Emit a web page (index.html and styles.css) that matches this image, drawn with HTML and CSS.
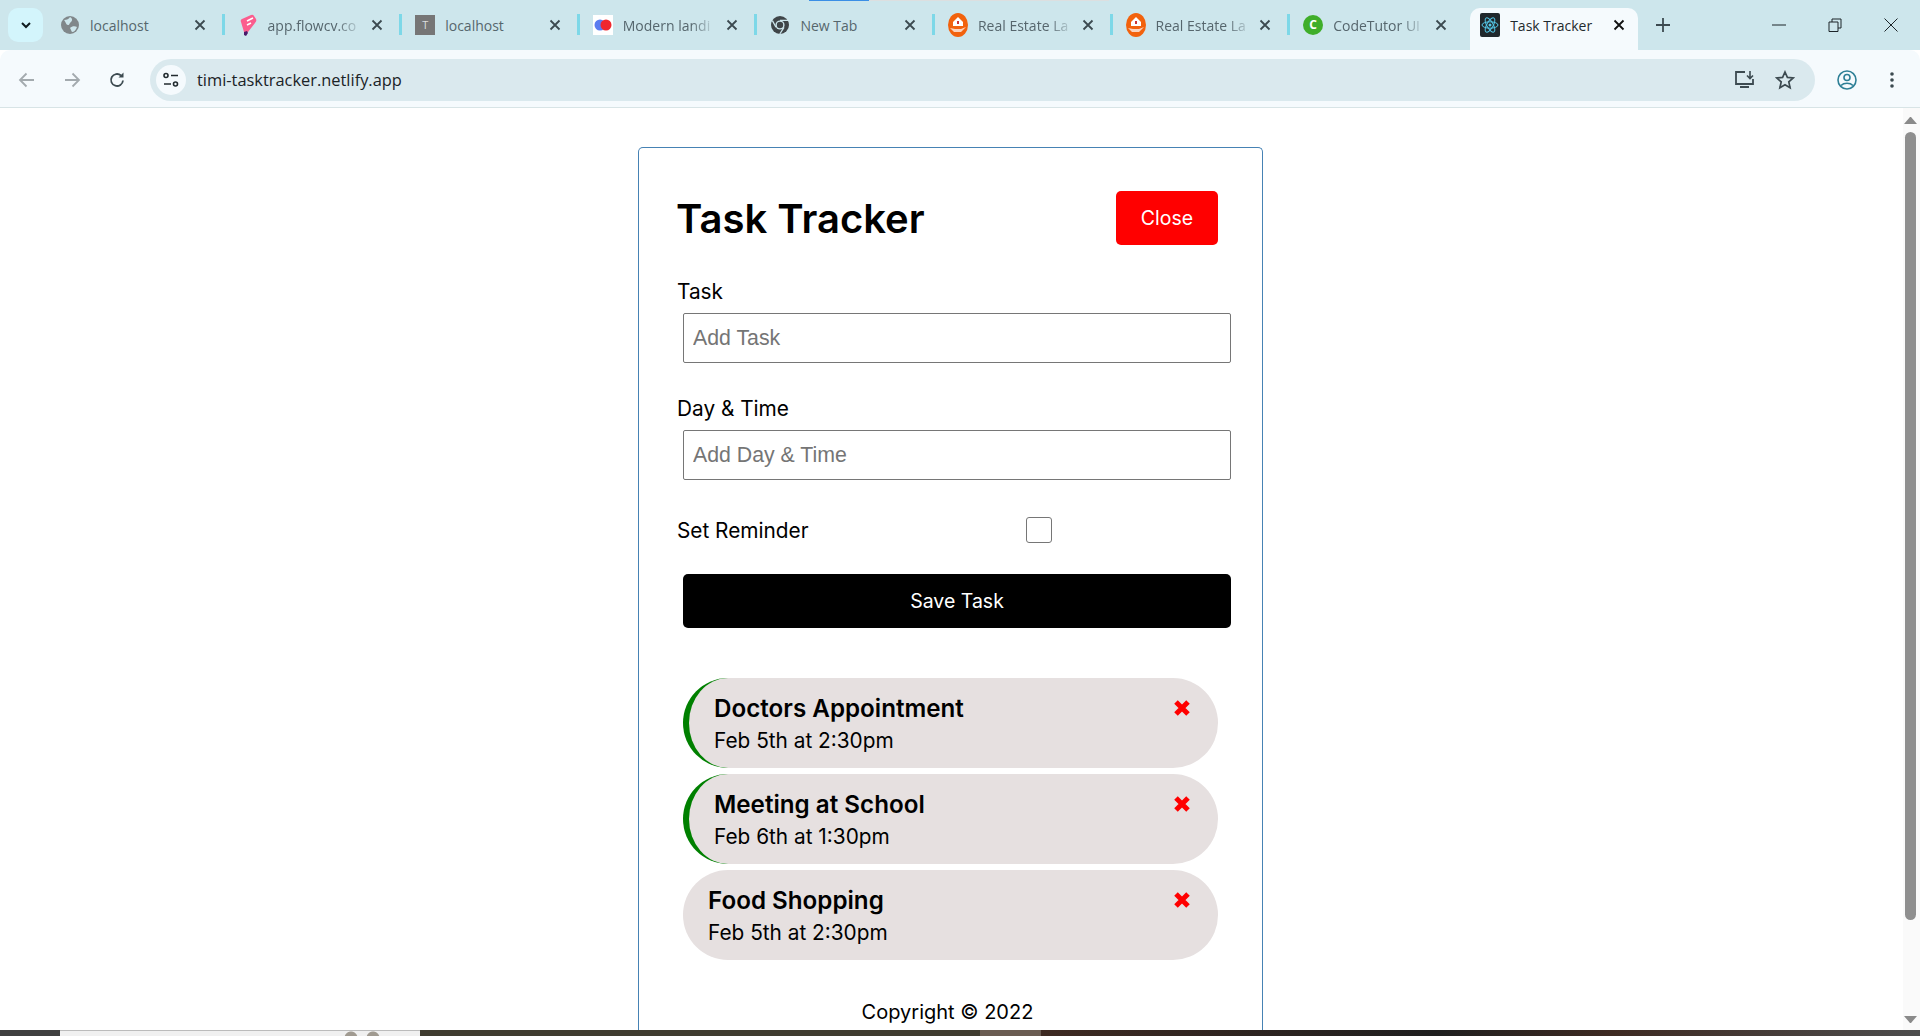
FILE: index.html
```html
<!DOCTYPE html>
<html lang="en">
	<head>
		<meta charset="utf-8">
		<title>Task Tracker</title>
		<link rel="stylesheet" href="styles.css">
	</head>
	<body>
		<div class="loadbar"><span class="loadbar-fill"></span></div>

		<!-- browser tabs -->
		<div class="tabstrip">
			<div class="tabsearch">
				<svg width="14" height="14" viewBox="0 0 14 14"><path d="M3 5l4 4 4-4" fill="none" stroke="#0f1a1e" stroke-width="2"/></svg>
			</div>
			<div class="tab">
				<svg class="favicon" width="20" height="20" viewBox="0 0 20 20"><circle cx="10" cy="10" r="9" fill="#80878a"/><path d="M4 5c3 0 5-1 6-3 2 1 3 3 1 5-2 1-1 3-3 3-2 0-2-3-4-5zM10 13c2-2 5-2 7-1-1 3-3 5-5 5-1-1-1-3-2-4z" fill="#cde6ec"/></svg>
				<span class="tab-title">localhost</span>
				<svg class="tab-close" width="12" height="12" viewBox="0 0 12 12"><path d="M1.500 1.500l9 9M10.500 1.500l-9 9"/></svg>
			</div>
			<div class="tab">
				<svg class="favicon" width="20" height="24" viewBox="0 0 20 24"><path d="M3 9q-1-2 1-3l9-4q2-1 3 1l2 3q1 2-1 4l-7 9q-1 1-3 1l-1-1z" fill="#fb5d8e"/><path d="M6 19l3-1 1 2-2 3-2-1z" fill="#4a1a6b"/><path d="M9 8l6-3M9 12l4-2" stroke="#fff" stroke-width="1.600"/></svg>
				<span class="tab-title tab-fade">app.flowcv.co</span>
				<svg class="tab-close" width="12" height="12" viewBox="0 0 12 12"><path d="M1.500 1.500l9 9M10.500 1.500l-9 9"/></svg>
			</div>
			<div class="tab">
				<span class="favicon favicon-t">T</span>
				<span class="tab-title">localhost</span>
				<svg class="tab-close" width="12" height="12" viewBox="0 0 12 12"><path d="M1.500 1.500l9 9M10.500 1.500l-9 9"/></svg>
			</div>
			<div class="tab">
				<svg class="favicon" width="20" height="20" viewBox="0 0 20 20"><rect width="20" height="20" fill="#fff"/><circle cx="7" cy="10" r="5.500" fill="#5b7cf0"/><circle cx="13" cy="10" r="5.500" fill="#f0262e"/></svg>
				<span class="tab-title tab-fade">Modern landi</span>
				<svg class="tab-close" width="12" height="12" viewBox="0 0 12 12"><path d="M1.500 1.500l9 9M10.500 1.500l-9 9"/></svg>
			</div>
			<div class="tab">
				<svg class="favicon" width="20" height="20" viewBox="0 0 20 20"><circle cx="10" cy="10" r="9" fill="#3f4548"/><circle cx="10" cy="10" r="4.600" fill="#cde6ec"/><circle cx="10" cy="10" r="3.200" fill="#3f4548"/><path d="M10 5.400h8M6 12.300L2.400 5.600M14 12.300L9.800 19" stroke="#cde6ec" stroke-width="1.300"/></svg>
				<span class="tab-title">New Tab</span>
				<svg class="tab-close" width="12" height="12" viewBox="0 0 12 12"><path d="M1.500 1.500l9 9M10.500 1.500l-9 9"/></svg>
			</div>
			<div class="tab">
				<svg class="favicon" width="20" height="24" viewBox="0 0 20 24"><ellipse cx="10" cy="12" rx="10" ry="12" fill="#f2620d"/><path d="M10 4l5 5v4H5V9z" fill="#fff"/><rect x="9" y="8" width="2" height="3" fill="#c33"/><path d="M2 15l5 1h6l5-2-5 5H6z" fill="#fbd3bd"/></svg>
				<span class="tab-title tab-fade">Real Estate La</span>
				<svg class="tab-close" width="12" height="12" viewBox="0 0 12 12"><path d="M1.500 1.500l9 9M10.500 1.500l-9 9"/></svg>
			</div>
			<div class="tab">
				<svg class="favicon" width="20" height="24" viewBox="0 0 20 24"><ellipse cx="10" cy="12" rx="10" ry="12" fill="#f2620d"/><path d="M10 4l5 5v4H5V9z" fill="#fff"/><rect x="9" y="8" width="2" height="3" fill="#c33"/><path d="M2 15l5 1h6l5-2-5 5H6z" fill="#fbd3bd"/></svg>
				<span class="tab-title tab-fade">Real Estate La</span>
				<svg class="tab-close" width="12" height="12" viewBox="0 0 12 12"><path d="M1.500 1.500l9 9M10.500 1.500l-9 9"/></svg>
			</div>
			<div class="tab tab-last">
				<span class="favicon favicon-c">C</span>
				<span class="tab-title tab-fade">CodeTutor UI</span>
				<svg class="tab-close" width="12" height="12" viewBox="0 0 12 12"><path d="M1.500 1.500l9 9M10.500 1.500l-9 9"/></svg>
			</div>
			<div class="tab tab-active">
				<svg class="favicon" width="20" height="24" viewBox="0 0 20 24"><rect width="20" height="24" rx="2" fill="#20272b"/><g fill="none" stroke="#54c8e8" stroke-width="1"><ellipse cx="10" cy="12" rx="8" ry="3.200"/><ellipse cx="10" cy="12" rx="8" ry="3.200" transform="rotate(60 10 12)"/><ellipse cx="10" cy="12" rx="8" ry="3.200" transform="rotate(120 10 12)"/></g><circle cx="10" cy="12" r="1.500" fill="#54c8e8"/></svg>
				<span class="tab-title">Task Tracker</span>
				<svg class="tab-close" width="12" height="12" viewBox="0 0 12 12"><path d="M1.500 1.500l9 9M10.500 1.500l-9 9"/></svg>
			</div>
			<svg class="newtab" width="14" height="14" viewBox="0 0 14 14"><path d="M7 0v14M0 7h14" stroke="#3c4a50" stroke-width="1.800"/></svg>
			<div class="winctrls">
				<svg width="14" height="14" viewBox="0 0 14 14"><path d="M0 7h14" stroke="#1c2428" stroke-width="1"/></svg>
				<svg width="14" height="14" viewBox="0 0 14 14"><path d="M1 4h9v9.500H1zM4 4V1h9v9h-3" fill="none" stroke="#1c2428" stroke-width="1"/></svg>
				<svg width="14" height="14" viewBox="0 0 14 14"><path d="M.5.5l13 13M13.500.5l-13 13" stroke="#1c2428" stroke-width="1"/></svg>
			</div>
		</div>

		<!-- address bar -->
		<div class="toolbar">
			<svg class="navicon" width="18" height="18" viewBox="0 0 18 18"><path d="M16 9H2M8.500 2.500L2 9l6.500 6.500" fill="none" stroke="#a3aaae" stroke-width="1.800"/></svg>
			<svg class="navicon" width="18" height="18" viewBox="0 0 18 18"><path d="M2 9h14M9.500 2.500L16 9l-6.500 6.500" fill="none" stroke="#a3aaae" stroke-width="1.800"/></svg>
			<svg class="navicon" width="18" height="18" viewBox="0 0 18 18"><path d="M15 9.500A6 6 0 1 1 13 4.500" fill="none" stroke="#3c4a50" stroke-width="1.800"/><path d="M15.500 1.500v5h-5z" fill="#3c4a50"/></svg>
			<div class="omnibox">
				<span class="siteinfo">
					<svg width="18" height="16" viewBox="0 0 18 16"><g fill="none" stroke="#222b2f" stroke-width="1.600"><circle cx="4" cy="3.500" r="2"/><path d="M9 3.500h7M2 12h7"/><circle cx="13.500" cy="12" r="2"/></g></svg>
				</span>
				<span class="url">timi-tasktracker.netlify.app</span>
				<svg class="omni-right" width="22" height="20" viewBox="0 0 22 20"><path d="M11 2H2v12h17V9M6 17h9" fill="none" stroke="#3c4a50" stroke-width="1.800"/><path d="M16 1v7M13 5.500l3 3 3-3" fill="none" stroke="#3c4a50" stroke-width="1.600"/></svg>
				<svg class="omni-star" width="20" height="20" viewBox="0 0 20 20"><path d="M10 2l2.400 5.400 5.800.6-4.400 3.900 1.300 5.800L10 14.700l-5.100 3 1.300-5.800L1.800 8l5.800-.6z" fill="none" stroke="#3c4a50" stroke-width="1.700"/></svg>
			</div>
			<svg class="profile" width="20" height="20" viewBox="0 0 20 20"><g fill="none" stroke="#2d7f96" stroke-width="1.600"><circle cx="10" cy="10" r="9"/><circle cx="10" cy="7.500" r="3"/><path d="M4 15.500c3-3 9-3 12 0"/></g></svg>
			<svg class="kebab" width="4" height="18" viewBox="0 0 4 18"><circle cx="2" cy="3" r="1.800" fill="#3c4a50"/><circle cx="2" cy="9" r="1.800" fill="#3c4a50"/><circle cx="2" cy="15" r="1.800" fill="#3c4a50"/></svg>
		</div>

		<div class="viewport">
			<div class="page">
				<div class="container">
					<header class="header">
						<h1>Task Tracker</h1>
						<button class="btn btn-close">Close</button>
					</header>

					<form class="add-form">
						<div class="form-control">
							<label>Task</label>
							<input type="text" placeholder="Add Task">
						</div>
						<div class="form-control">
							<label>Day &amp; Time</label>
							<input type="text" placeholder="Add Day &amp; Time">
						</div>
						<div class="form-check">
							<label>Set Reminder</label>
							<span class="checkbox"></span>
						</div>
						<button type="button" class="btn btn-save">Save Task</button>
					</form>

					<div class="tasks">
						<div class="task reminder">
							<div>
								<h3>Doctors Appointment</h3>
								<p>Feb 5th at 2:30pm</p>
							</div>
							<svg class="del" width="18" height="18" viewBox="0 0 18 18"><path d="M3 3l12 12M15 3L3 15"/></svg>
						</div>
						<div class="task reminder">
							<div>
								<h3>Meeting at School</h3>
								<p>Feb 6th at 1:30pm</p>
							</div>
							<svg class="del" width="18" height="18" viewBox="0 0 18 18"><path d="M3 3l12 12M15 3L3 15"/></svg>
						</div>
						<div class="task">
							<div>
								<h3>Food Shopping</h3>
								<p>Feb 5th at 2:30pm</p>
							</div>
							<svg class="del" width="18" height="18" viewBox="0 0 18 18"><path d="M3 3l12 12M15 3L3 15"/></svg>
						</div>
					</div>

					<footer class="footer">Copyright &copy; 2022</footer>
				</div>
			</div>
			<div class="scrollbar">
				<span class="arrow-up"></span>
				<div class="scroll-track"><span class="scroll-thumb"></span></div>
				<span class="arrow-down"></span>
			</div>
		</div>

		<div class="taskbar">
			<span class="strip strip-a"></span>
			<span class="strip strip-b"></span>
			<span class="strip strip-c"></span>
			<span class="strip strip-d"></span>
			<span class="strip strip-e"></span>
		</div>
	</body>
</html>
```

FILE: styles.css
```css
* {
	box-sizing: border-box;
}
html, body {
	height: 100%;
}
body {
	margin: 0;
	overflow: hidden;
	display: flex;
	flex-direction: column;
	background: #fff;
	font-family: "Inter", "Liberation Sans", sans-serif;
}

/* loading line on top of the tab strip */
.loadbar {
	position: absolute;
	top: 0;
	left: 809px;
	width: 300px;
	height: 1px;
	background: #dcdfe0;
}
.loadbar-fill {
	display: block;
	width: 60px;
	height: 1px;
	background: #3b8fe6;
}

/* tab strip */
.tabstrip {
	height: 50px;
	flex: none;
	display: flex;
	align-items: flex-start;
	padding-left: 8px;
	background: #cde6ec;
}
.tabsearch {
	width: 35px;
	height: 34px;
	margin-top: 8px;
	margin-right: 8px;
	display: flex;
	align-items: center;
	justify-content: center;
	border-radius: 10px;
	background: #d3f5fc;
}
.tab {
	position: relative;
	width: 177.6px;
	height: 34px;
	margin-top: 8px;
	padding: 0 23px 0 9px;
	display: flex;
	align-items: center;
	flex: none;
	font-family: "Open Sans", "Liberation Sans", sans-serif;
	font-size: 14px;
	color: #56666d;
}
.tab::after {
	content: "";
	position: absolute;
	right: 4px;
	top: 6px;
	width: 3px;
	height: 21px;
	background: #7dd8e8;
}
.tab-last {
	width: 176px;
}
.tab-last::after, .tab-active::after {
	display: none;
}
.tab-active {
	width: 168px;
	height: 42px;
	padding: 0 13px 8px 10px;
	border-radius: 10px 10px 0 0;
	background: #f5fafd;
	color: #1f2a2e;
}
.favicon {
	flex: none;
	margin-right: 10px;
}
.favicon-t {
	width: 20px;
	height: 20px;
	display: block;
	background: #767676;
	color: #ddd;
	font-size: 11px;
	line-height: 20px;
	text-align: center;
}
.favicon-c {
	width: 20px;
	height: 20px;
	border-radius: 50%;
	background: #3fae2a;
	color: #fff;
	font-weight: bold;
	font-size: 12px;
	line-height: 20px;
	text-align: center;
}
.tab-title {
	flex: none;
	white-space: nowrap;
}
.tab-fade {
	-webkit-mask-image: linear-gradient(to right, #000 78%, rgba(0,0,0,0.25) 100%);
	mask-image: linear-gradient(to right, #000 78%, rgba(0,0,0,0.25) 100%);
}
.tab-close {
	flex: none;
	margin-left: auto;
	fill: none;
	stroke: #3c4a50;
	stroke-width: 1.8;
}
.tab-active .tab-close {
	stroke: #111;
}
.newtab {
	margin: 18px 0 0 18px;
}
.winctrls {
	margin-left: auto;
	padding: 18px 22px 0 0;
	display: flex;
	gap: 42px;
}

/* address bar */
.toolbar {
	height: 58px;
	flex: none;
	display: flex;
	align-items: center;
	padding-top: 2px;
	background: #f5fafd;
	border-bottom: 1px solid #d8e4e6;
	border-radius: 10px 10px 0 0;
}
.navicon {
	flex: none;
	margin-left: 18px;
	margin-right: 9px;
}
.navicon:nth-child(3) {
	margin-right: 0;
}
.omnibox {
	width: 1665px;
	height: 42px;
	margin-left: 24px;
	padding-left: 6px;
	display: flex;
	align-items: center;
	border-radius: 21px;
	background: #dae9ee;
}
.siteinfo {
	width: 30px;
	height: 30px;
	display: flex;
	align-items: center;
	justify-content: center;
	border-radius: 50%;
	background: #f5fafd;
}
.url {
	margin-left: 11px;
	font-family: "Open Sans", "Liberation Sans", sans-serif;
	font-size: 16.4px;
	color: #1b2327;
}
.omni-right {
	margin-left: auto;
}
.omni-star {
	margin: 0 20px 0 19px;
}
.profile {
	margin-left: 22px;
}
.kebab {
	margin-left: 33px;
}

/* page */
.viewport {
	flex: 1;
	min-height: 0;
	display: flex;
}
.page {
	flex: 1;
	min-width: 0;
	overflow: hidden;
	padding: 39px 0 0 638px;
}
.container {
	width: 625px;
	min-height: 900px;
	padding: 43px 44px 0 38px;
	border: 1px solid steelblue;
	border-bottom: 0;
	border-radius: 5px 5px 0 0;
	color: #000;
}
.header {
	height: 54px;
	display: flex;
	align-items: center;
	justify-content: space-between;
}
.header h1 {
	margin: 0 0 0 -1px;
	font-size: 40px;
	font-weight: 600;
}
.btn {
	border: 0;
	border-radius: 5px;
	color: #fff;
	font-family: inherit;
	font-size: 19.5px;
}
.btn-close {
	width: 102px;
	height: 54px;
	background: #f00;
}
.form-control {
	margin-top: 32px;
}
.form-control:first-child {
	margin-top: 33px;
}
.form-control label {
	display: block;
	height: 25px;
	line-height: 28px;
	font-size: 20.8px;
}
.form-control input {
	display: block;
	width: 548px;
	height: 50px;
	margin: 10px 0 0 6px;
	padding: 0 9px;
	border: 1px solid #767676;
	border-radius: 2px;
	font-family: "Liberation Sans", Arial, sans-serif;
	font-size: 21.3px;
}
.form-control input::placeholder {
	color: #757575;
}
.form-check {
	height: 26px;
	margin-top: 37px;
	display: flex;
	align-items: center;
}
.form-check label {
	width: 349px;
	font-size: 20.8px;
}
.checkbox {
	width: 26px;
	height: 26px;
	border: 1px solid #767676;
	border-radius: 3px;
}
.btn-save {
	display: block;
	width: 548px;
	height: 54px;
	margin: 31px 0 0 6px;
	background: #000;
}
.tasks {
	margin: 50px 0 0 6px;
	display: flex;
	flex-direction: column;
	gap: 6px;
}
.task {
	width: 535px;
	height: 90px;
	padding: 16px 27px 0 25px;
	display: flex;
	justify-content: space-between;
	border-radius: 45px;
	background: #e6e0e0;
}
.task.reminder {
	border-left: 6px solid green;
}
.task h3 {
	margin: 0;
	font-size: 24.2px;
	line-height: 30px;
	font-weight: 600;
}
.task p {
	margin: 3px 0 0;
	font-size: 20.8px;
	line-height: 28px;
}
.del {
	flex: none;
	margin-top: 5px;
	fill: none;
	stroke: #f00;
	stroke-width: 5;
}
.footer {
	margin-top: 37px;
	text-align: center;
	font-size: 20px;
	line-height: 30px;
}

/* scrollbar */
.scrollbar {
	width: 17px;
	flex: none;
	padding-left: 1px;
	display: flex;
	flex-direction: column;
	background: #fafafa;
}
.arrow-up {
	width: 13px;
	margin-top: 9px;
	border: 6.5px solid transparent;
	border-top: 0;
	border-bottom: 7px solid #8a8a8a;
}
.arrow-down {
	width: 13px;
	margin-bottom: 7px;
	border: 6.5px solid transparent;
	border-bottom: 0;
	border-top: 7px solid #8a8a8a;
}
.scroll-track {
	flex: 1;
	padding: 8px 0 0 1px;
}
.scroll-thumb {
	display: block;
	width: 11px;
	height: 788px;
	border-radius: 6px;
	background: #8f8f8f;
}

/* bit of the desktop showing under the window */
.taskbar {
	height: 6px;
	flex: none;
	display: flex;
	background: #3f3a2e;
}
.strip {
	display: block;
	height: 100%;
}
.strip-a {
	width: 60px;
	background: #3f3f3f;
}
.strip-b {
	width: 360px;
	background: radial-gradient(circle at 291px 7px, #a09a90 6px, transparent 7px), radial-gradient(circle at 313px 7px, #a09a90 6px, transparent 7px), #f0f0f0;
	border-top: 1px solid #bbb;
}
.strip-c {
	width: 560px;
	background: #403c30;
}
.strip-d {
	width: 61px;
	background: #6a5c52;
}
.strip-e {
	flex: 1;
	background: linear-gradient(to right, #3e2a22 0%, #1f1f1f 45%, #3e2a22 65%, #4d4d4d 100%);
}
```
